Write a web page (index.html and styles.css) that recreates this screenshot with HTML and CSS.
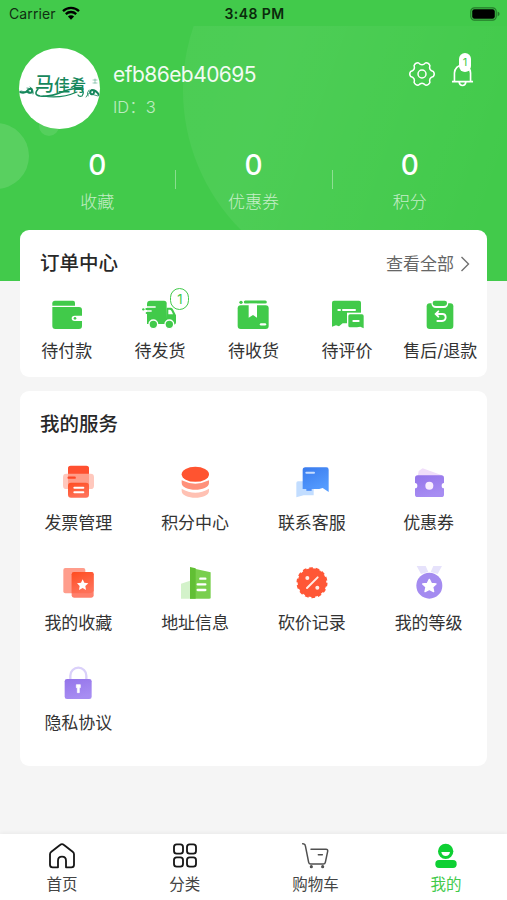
FILE: index.html
```html
<!DOCTYPE html>
<html lang="zh-CN">
<head>
<meta charset="utf-8">
<title>我的</title>
<link rel="stylesheet" href="styles.css">
</head>
<body>
<div class="app">
  <header class="hero">
    <svg class="hero-bg" viewBox="0 0 507 281" aria-hidden="true">
      <defs>
        <linearGradient id="glow" x1="0" y1="0.3" x2="0.85" y2="0.6">
          <stop offset="0" stop-color="#fff" stop-opacity=".05"/>
          <stop offset=".3" stop-color="#fff" stop-opacity=".06"/>
          <stop offset="1" stop-color="#fff" stop-opacity="0"/>
        </linearGradient>
        <clipPath id="below-status"><rect y="26" width="507" height="255"/></clipPath>
      </defs>
      <circle cx="381" cy="90" r="198" fill="url(#glow)" clip-path="url(#below-status)"/>
      <circle cx="-4" cy="156" r="33" fill="#fff" opacity=".12"/>
      <circle cx="49" cy="126" r="10" fill="#fff" opacity=".1"/>
    </svg>
    <div class="status">
      <div class="carrier">Carrier
        <svg width="18" height="14" viewBox="0 0 18 14"><path d="M1 5.2a11.5 11.5 0 0 1 16 0M3.8 8.1a7.5 7.5 0 0 1 10.4 0" fill="none" stroke="#000" stroke-width="2.3"/><path d="M9 13.8 5.9 10.6a4.4 4.4 0 0 1 6.2 0z"/></svg>
      </div>
      <div class="clock">3:48 PM</div>
      <svg class="battery" width="30" height="14" viewBox="0 0 30 14"><rect x=".8" y=".8" width="25.4" height="12.4" rx="3.6" fill="none" stroke="#247a2a" stroke-width="1.2"/><rect x="2.2" y="2.2" width="22.6" height="9.6" rx="2.2"/><path d="M27.6 4.6q2 1 2 2.4t-2 2.4z" fill="#247a2a"/></svg>
    </div>
    <div class="profile">
      <div class="avatar">
        <div class="brand"><span class="brand-lead">马</span>佳肴</div>
        <svg class="swirl" viewBox="0 0 81 81" fill="none" stroke="#16875c" stroke-linecap="round">
          <path d="M19 41q-5 6 2 7 11 1 22-4t21-3" stroke-width="1.5"/>
          <path d="M24 48q18 3 34-4M62 41q4 3 1 7-3 1-4-1" stroke-width="1.2"/>
          <path d="M1 44q5 2 8-2 4-3 4 1 0 3-4 1M80 47q-3-5-7-5-3 1-1 4 3 1 3-2" stroke-width="2"/>
          <path d="M8 40q4 0 6 5m-3-6q4 2 3 7M70 42q-3 3-1 6m3-4q-4 2-5 5M2 43l8 2M79 48l-7-2" stroke-width=".8"/>
          <path d="M76 31v4m-2-3h4m-4 3h4" stroke-width=".7" opacity=".6"/>
        </svg>
      </div>
      <div class="identity">
        <div class="name">efb86eb40695</div>
        <div class="uid">ID：3</div>
      </div>
      <div class="actions">
        <svg width="26" height="26" viewBox="0 0 26 26" fill="none" stroke="#fff" stroke-width="1.5" stroke-linejoin="round"><path d="M24.300 10.400Q26.200 13 24.300 15.600 19.500 16.750 20.900 21.500 19.600 24.400 16.400 24.100 13 20.500 9.600 24.100 6.400 24.400 5.100 21.500 6.500 16.750 1.700 15.600-.2 13 1.700 10.400 6.500 9.250 5.100 4.500 6.400 1.600 9.600 1.900 13 5.500 16.400 1.900 19.600 1.600 20.900 4.500 19.500 9.250 24.300 10.400Z"/><circle cx="13" cy="13" r="4"/></svg>
        <div class="bell">
          <svg width="24" height="26" viewBox="0 0 24 26" fill="none" stroke="#fff" stroke-width="1.7"><path d="M1 21h22M3.600 21V12a8.400 8.400 0 0 1 16.800 0v9M8.500 21.500q.5 3.500 3.500 3.500t3.500-3.500"/></svg>
          <span class="bell-count">1</span>
        </div>
      </div>
    </div>
    <div class="stats">
      <div class="stat"><b>0</b><span>收藏</span></div>
      <div class="stat"><b>0</b><span>优惠券</span></div>
      <div class="stat"><b>0</b><span>积分</span></div>
    </div>
  </header>

  <main class="content">
    <section class="card orders">
      <div class="card-head">
        <h2>订单中心</h2>
        <div class="more">查看全部<svg width="10" height="16" viewBox="0 0 10 16"><path d="M1.500 1 8.500 8l-7 7" fill="none" stroke="#707070" stroke-width="1.400"/></svg></div>
      </div>
      <div class="grid five">
        <div class="item">
          <svg class="icon" viewBox="0 0 102 102" fill="#41ca4a"><path d="M7 23V16q0-8 8-8h54q6 0 6 7v8z"/><path d="M7 27h80q9 0 9 9v17H74a9 8 0 0 0 0 16h22v15q0 9-9 9H16q-9 0-9-9z"/><circle cx="75" cy="61" r="4"/></svg>
          <span>待付款</span>
        </div>
        <div class="item">
          <svg class="icon" viewBox="0 0 102 102" fill="#41ca4a"><path d="M22 8h41q8 0 8 8v62H12V18q0-10 10-10z"/><path d="M71 29h12q5 0 8 7l8 16v20q0 8-8 8H68z"/><path d="M76 35h5q3 0 5 5l4 9H76z" fill="#fff"/><path d="M8 27h30M8 39h18" stroke="#fff" stroke-width="4"/><path d="M10 33h26M11 45h10" stroke="#41ca4a" stroke-width="6" stroke-linecap="round"/><circle cx="1" cy="34" r="3.500"/><circle cx="31" cy="79" r="13" stroke="#fff" stroke-width="4"/><circle cx="79" cy="79" r="13" stroke="#fff" stroke-width="4"/></svg>
          <i class="count">1</i>
          <span>待发货</span>
        </div>
        <div class="item">
          <svg class="icon" viewBox="0 0 102 102" fill="#41ca4a"><path d="M28 12h60" stroke="#41ca4a" stroke-width="9" stroke-linecap="round"/><circle cx="15" cy="13" r="5"/><path d="M14 22h75q9 0 9 9v53q0 9-9 9H14q-9 0-9-9V31q0-9 9-9z"/><path d="M38 17h25v42l-12-8-13 8z" fill="#fff"/><path d="M75 79h12" stroke="#fff" stroke-width="7" stroke-linecap="round"/></svg>
          <span>待收货</span>
        </div>
        <div class="item">
          <svg class="icon" viewBox="0 0 102 102" fill="#41ca4a"><path d="M12 8h75q6 0 6 6v62H38L27 85l-9-3-12 4V14q0-6 6-6z"/><path d="M51 44h50v48H51z" fill="#fff"/><path d="M60 49h36q5 0 5 5v37l-10-5-10 2H60q-5 0-5-5V54q0-5 5-5z"/><path d="M25 36h5m9 0h36M70 69h16" stroke="#fff" stroke-width="6" stroke-linecap="round"/></svg>
          <span>待评价</span>
        </div>
        <div class="item">
          <svg class="icon" viewBox="0 0 102 102" fill="#41ca4a"><rect x="11" y="16" width="80" height="77" rx="9"/><path d="M25 6h51v6q0 18-14 18H39Q25 30 25 12z" fill="#fff"/><path d="M36 8h29q7 0 7 7 0 9-10 9H39q-10 0-10-9 0-7 7-7z"/><path d="m46 40-8 8 8 8M40 48h18q10 0 10 10T57 69H43" fill="none" stroke="#fff" stroke-width="5.500" stroke-linecap="round"/></svg>
          <span>售后/退款</span>
        </div>
      </div>
    </section>

    <section class="card services">
      <h2>我的服务</h2>
      <div class="grid four">
        <div class="item">
          <svg class="icon" viewBox="0 0 102 102"><defs><linearGradient id="red" x2=".4" y2="1"><stop stop-color="#ff4c20"/><stop offset="1" stop-color="#ff7158"/></linearGradient></defs><rect x="6" y="26" width="93" height="46" rx="10" fill="#ffc8bd"/><rect x="21" y="3" width="63" height="65" rx="9" fill="#ff9d89"/><path d="M29 2h47q8 0 8 8v16H21V10q0-8 8-8z" fill="#ff5030"/><path d="M23 38h18" stroke="#ff4626" stroke-width="7" stroke-linecap="round"/><rect x="21" y="53" width="63" height="45" rx="9" fill="url(#red)"/><path d="M40 68h27M40 82h27" stroke="#fff" stroke-width="6" stroke-linecap="round"/></svg>
          <span>发票管理</span>
        </div>
        <div class="item">
          <svg class="icon" viewBox="0 0 102 102"><path d="M11 71q41 24 82 0v7c0 27-82 27-82 0z" fill="#ffc1b3"/><path d="M11 46q41 20 82 0v8c0 27-82 27-82 0z" fill="#ff907a"/><ellipse cx="52" cy="28" rx="43" ry="26" fill="#fff"/><ellipse cx="52" cy="28" rx="41" ry="22.500" fill="#ff5430"/></svg>
          <span>积分中心</span>
        </div>
        <div class="item">
          <svg class="icon" viewBox="0 0 102 102"><defs><linearGradient id="blue" x2=".5" y2="1"><stop stop-color="#3a7bed"/><stop offset="1" stop-color="#559cff"/></linearGradient></defs><path d="M9 49h43q4 0 4 5v37H26L4 97V54q0-5 5-5z" fill="#c2ddff"/><path d="M31 7h63q7 0 7 7v67l-18-12-10 3H23V15q0-8 8-8z" fill="url(#blue)"/><path d="M34 23h23" stroke="#c7ddff" stroke-width="6" stroke-linecap="round"/><path d="M34 74h16" stroke="#4c8df7" stroke-width="7"/></svg>
          <span>联系客服</span>
        </div>
        <div class="item">
          <svg class="icon" viewBox="0 0 102 102"><defs><linearGradient id="violet" x2=".4" y2="1"><stop stop-color="#9474ea"/><stop offset="1" stop-color="#a78df2"/></linearGradient></defs><path d="m20 18 12-8 58 21-3 10H16z" fill="#f0ddfa"/><path d="M17 31h71q8 0 8 8v15q-7 0-7 8t7 8v19q0 7-8 7H17q-8 0-8-7V70q7 0 7-8t-7-8V39q0-8 8-8z" fill="url(#violet)"/><circle cx="52" cy="62" r="12" fill="#f8edff"/></svg>
          <span>优惠券</span>
        </div>
        <div class="item">
          <svg class="icon" viewBox="0 0 102 102"><rect x="7" y="9" width="66" height="76" rx="6" fill="#ff9d8c"/><rect x="32" y="21" width="66" height="77" rx="7" fill="#ff806c"/><path d="M39 21h52q7 0 7 7v50q-4 7-14 7H32V28q0-7 7-7z" fill="url(#red)"/><path d="m65 43 5 10 12 2-9 8 2 12-10-6-11 6 2-12-8-8 12-2z" fill="#fff"/></svg>
          <span>我的收藏</span>
        </div>
        <div class="item">
          <svg class="icon" viewBox="0 0 102 102"><path d="m9 56 27-9v54H9z" fill="#d3f2ca"/><path d="m36 8 62 14v77q0 2-5 2H36z" fill="#79cf4d"/><path d="m36 6 17 4v91H36z" fill="#61bf34"/><path d="M67 41h15M59 58h23M59 75h23" stroke="#fff" stroke-width="7" stroke-linecap="round"/></svg>
          <span>地址信息</span>
        </div>
        <div class="item">
          <svg class="icon" viewBox="0 0 102 102"><circle cx="51" cy="53" r="43" fill="#ff5736"/><circle cx="51" cy="53" r="43" fill="none" stroke="#ff5736" stroke-width="7" stroke-dasharray="11 8.300" stroke-linejoin="round"/><path d="M36 69 68 37" stroke="#ffece6" stroke-width="6" stroke-linecap="round"/><circle cx="37" cy="39" r="6" fill="#ffece6"/><circle cx="67" cy="68" r="6" fill="#ffece6"/></svg>
          <span>砍价记录</span>
        </div>
        <div class="item">
          <svg class="icon" viewBox="0 0 102 102"><path d="M14 3h27l8 18-22 6zM90 3H64l-8 18 21 6z" fill="#e6e2fb"/><circle cx="52" cy="62" r="39" fill="#a48bf0"/><path d="m52 43 6 12 14 2-10 9 3 14-13-7-13 7 3-14-10-9 14-2z" fill="#fff" stroke="#fff" stroke-width="4" stroke-linejoin="round"/></svg>
          <span>我的等级</span>
        </div>
        <div class="item">
          <svg class="icon" viewBox="0 0 102 102"><path d="M28 45V32a24 24 0 0 1 48 0v13" fill="none" stroke="#dad0fa" stroke-width="7"/><rect x="11" y="42" width="81" height="60" rx="7" fill="url(#violet)"/><path d="M46 59h12v9h-3v15h-6V68h-3z" fill="#fff" stroke="#fff" stroke-width="2" stroke-linejoin="round"/></svg>
          <span>隐私协议</span>
        </div>
      </div>
    </section>
  </main>

  <nav class="tabs">
    <div class="tab">
      <svg width="26" height="26" viewBox="0 0 78 78"><path d="M3 34q0-5 4-8L33 6q6-5 12 0l26 20q4 3 4 8v31q0 8-8 8H51V53q0-12-12-12T27 53v20H11q-8 0-8-8z" fill="none" stroke="#171717" stroke-width="5.500" stroke-linejoin="round"/></svg>
      <span>首页</span>
    </div>
    <div class="tab">
      <svg width="26" height="26" viewBox="0 0 78 78" fill="none" stroke="#171717" stroke-width="5.500"><rect x="6" y="4" width="27" height="28" rx="8"/><rect x="45" y="4" width="27" height="28" rx="8"/><rect x="6" y="43" width="27" height="28" rx="8"/><rect x="45" y="43" width="27" height="28" rx="8"/></svg>
      <span>分类</span>
    </div>
    <div class="tab">
      <svg width="26" height="26" viewBox="0 0 78 78" fill="none" stroke="#505050" stroke-width="4.500" stroke-linecap="round" stroke-linejoin="round"><path d="M2 2q7 0 8 6l10 50q1 5 6 5h38q5 0 6-5l7-33q1-6-5-6H27M49 35h12"/><circle cx="28" cy="71" r="2.500"/><circle cx="62" cy="71" r="2.500"/></svg>
      <span>购物车</span>
    </div>
    <div class="tab active">
      <svg width="26" height="26" viewBox="0 0 78 78"><circle cx="38" cy="25" r="23" fill="#0ed033"/><path d="M25 27h26q-2 12-13 12T25 27z" fill="#fff"/><rect x="7" y="51" width="64" height="24" rx="11" fill="#0ed033"/></svg>
      <span>我的</span>
    </div>
  </nav>
</div>
</body>
</html>
```
FILE: styles.css
```css
* { box-sizing: border-box; }
body {
  margin: 0;
  font-family: Inter, "Noto Sans CJK SC", sans-serif;
  color: #333;
  background: #f5f5f5;
}
svg { display: block; overflow: visible; }
.app {
  width: 507px;
  height: 900px;
  display: flex;
  flex-direction: column;
  overflow: hidden;
}

/* Green header */
.hero {
  position: relative;
  height: 281px;
  flex: none;
  background: #42ca4b;
}
.hero-bg {
  position: absolute;
  inset: 0;
  width: 507px;
  height: 281px;
  overflow: hidden;
}
.status {
  position: relative;
  height: 27px;
  padding: 0 7px 0 9px;
  display: grid;
  grid-template-columns: 1fr auto 1fr;
  align-items: center;
  color: #102e12;
}
.carrier {
  display: flex;
  align-items: center;
  gap: 6px;
  font-size: 14px;
  letter-spacing: 0.1px;
}
.carrier svg { margin-top: -2px; }
.clock {
  font-size: 14px;
  font-weight: 600;
  letter-spacing: 0.4px;
  color: #0a2a0c;
}
.battery { justify-self: end; }
.profile {
  position: relative;
  display: flex;
  padding: 21px 33px 0 19px;
}
.avatar {
  position: relative;
  width: 81px;
  height: 81px;
  border-radius: 50%;
  background: #fff;
  overflow: hidden;
  flex: none;
}
.brand {
  padding: 24px 0 0 16px;
  font-family: "Noto Sans CJK SC", sans-serif;
  font-size: 16px;
  line-height: 22px;
  font-weight: 500;
  color: #16875c;
  white-space: nowrap;
}
.brand-lead { font-size: 19px; }
.swirl {
  position: absolute;
  inset: 0;
}
.identity {
  margin-left: 13px;
  padding-top: 13px;
  color: #fff;
}
.name {
  font-size: 21px;
  line-height: 28px;
  letter-spacing: -0.55px;
  opacity: .93;
}
.uid {
  margin-top: 5px;
  font-size: 16.5px;
  line-height: 26px;
  font-weight: 300;
  opacity: .65;
}
.actions {
  margin-left: auto;
  padding-top: 13px;
  display: flex;
  gap: 16px;
}
.bell { position: relative; }
.bell svg { width: 23px; }
.bell-count {
  position: absolute;
  left: 8px;
  top: -8px;
  width: 12px;
  height: 19px;
  border-radius: 6px;
  background: #fff;
  color: #42ca4b;
  font-size: 11px;
  line-height: 19px;
  text-align: center;
}
.stats {
  position: relative;
  padding: 18px 19px 0;
  display: grid;
  grid-template-columns: repeat(3, 1fr);
}
.stat {
  position: relative;
  display: flex;
  flex-direction: column;
  align-items: center;
  color: #fff;
}
.stat b {
  font-size: 28px;
  line-height: 36px;
  font-weight: 500;
}
.stat span {
  margin-top: 7px;
  font-size: 17px;
  line-height: 24px;
  font-weight: 300;
  opacity: .68;
}
.stat + .stat::before {
  content: "";
  position: absolute;
  left: 0;
  top: 23px;
  width: 1px;
  height: 19px;
  background: rgba(255, 255, 255, .38);
}

/* Cards */
.content {
  position: relative;
  flex: 1;
  margin-top: -51px;
  padding: 0 20px;
  display: flex;
  flex-direction: column;
  gap: 14px;
}
.card {
  background: #fff;
  border-radius: 9px;
}
.orders { height: 147px; }
.services { height: 375px; }
.card-head {
  display: flex;
  justify-content: space-between;
  padding-right: 17px;
}
h2 {
  margin: 0;
  padding: 19px 0 0 20px;
  font-size: 19.5px;
  line-height: 28px;
  font-weight: 500;
  color: #282828;
}
.more {
  padding-top: 20px;
  display: flex;
  align-items: center;
  gap: 6px;
  font-size: 17px;
  line-height: 28px;
  color: #666;
}
.grid { display: grid; }
.five {
  grid-template-columns: repeat(5, 1fr);
  margin-top: 20px;
}
.four {
  grid-template-columns: repeat(4, 1fr);
  grid-auto-rows: 100px;
  margin-top: 27px;
}
.item {
  position: relative;
  display: flex;
  flex-direction: column;
  align-items: center;
}
.icon {
  width: 34px;
  height: 34px;
  flex: none;
}
.item span {
  margin-top: 7px;
  font-size: 17px;
  line-height: 24px;
  white-space: nowrap;
}
.four .item span { margin-top: 12px; }
.count {
  position: absolute;
  left: 57px;
  top: -10px;
  width: 19px;
  height: 22px;
  border: 1.5px solid #41ca4a;
  border-radius: 10px;
  background: #fff;
  color: #41ca4a;
  font-size: 13px;
  line-height: 20px;
  font-style: normal;
  text-align: center;
}

/* Bottom navigation */
.tabs {
  height: 66px;
  flex: none;
  display: flex;
  justify-content: space-around;
  background: #fff;
  box-shadow: 0 -1px 4px rgba(0, 0, 0, .05);
}
.tab {
  padding: 9px 0 0 1px;
  display: flex;
  flex-direction: column;
  align-items: center;
  font-size: 15.5px;
  line-height: 22px;
  color: #444;
}
.tab span { margin-top: 5px; }
.active { color: #42ca4b; }
```
